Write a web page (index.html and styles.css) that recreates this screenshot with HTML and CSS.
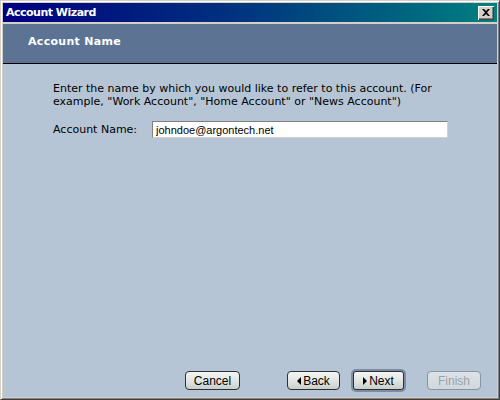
FILE: index.html
```html
<!DOCTYPE html>
<html lang="en">
<head>
    <meta charset="UTF-8">
    <title>Account Wizard</title>
    <link rel="stylesheet" href="styles.css">
</head>
<body>
    <div class="window">
        <div class="titlebar">
            <span class="title">Account Wizard</span>
            <button class="close-btn" aria-label="Close">
                <svg width="8" height="7" viewBox="0 0 8 7">
                    <path d="M0 0 L2 0 L4 2 L6 0 L8 0 L5 3.5 L8 7 L6 7 L4 5 L2 7 L0 7 L3 3.5 Z" fill="#000"/>
                </svg>
            </button>
        </div>
        <div class="header">Account Name</div>
        <div class="content">
            <p class="intro">Enter the name by which you would like to refer to this account. (For<br>example, "Work Account", "Home Account" or "News Account")</p>
            <div class="field">
                <label class="field-label" for="accountName">Account Name:</label>
                <input class="field-input" type="text" id="accountName" value="johndoe@argontech.net">
            </div>
            <div class="footer">
                <button class="button cancel">Cancel</button>
                <button class="button back"><span class="arrow arrow-left"></span>Back</button>
                <span class="focus-ring"><button class="button next"><span class="arrow arrow-right"></span>Next</button></span>
                <button class="button finish" disabled>Finish</button>
            </div>
        </div>
    </div>
</body>
</html>
```

FILE: styles.css
```css
body {
    margin: 0;
    padding: 0;
    font-family: 'DejaVu Sans', sans-serif;
    background-color: #d4d0c8;
}
.window {
    box-sizing: border-box;
    width: 500px;
    height: 400px;
    display: flex;
    flex-direction: column;
    padding: 2px;
    background-color: #d4d0c8;
    border-top: 1px solid #d4d0c8;
    border-left: 1px solid #d4d0c8;
    border-right: 1px solid #404040;
    border-bottom: 1px solid #404040;
    box-shadow: inset 1px 1px 0 #fff, inset -1px -1px 0 #808080;
}
.titlebar {
    height: 19px;
    display: flex;
    align-items: center;
    justify-content: space-between;
    padding: 0 3px 0 3px;
    background: linear-gradient(to right, #000080 0%, #00307f 45%, #008080 100%);
}
.title {
    color: #fff;
    font-weight: bold;
    font-size: 11px;
    letter-spacing: -0.5px;
}
.close-btn {
    box-sizing: border-box;
    width: 16px;
    height: 14px;
    padding: 0;
    display: flex;
    align-items: center;
    justify-content: center;
    background-color: #d4d0c8;
    border: none;
    box-shadow: inset 1px 1px 0 #fff, inset -1px -1px 0 #404040, inset -2px -2px 0 #808080;
}
.header {
    box-sizing: border-box;
    margin-top: 2px;
    height: 40px;
    display: flex;
    align-items: center;
    padding: 0 0 4px 25px;
    background-color: #5d7394;
    border-bottom: 1px solid #000;
    color: #fff;
    font-weight: bold;
    font-size: 11px;
    letter-spacing: 0.3px;
}
.content {
    flex-grow: 1;
    display: flex;
    flex-direction: column;
    background-color: #b5c5d5;
    padding: 0 16px 5px 50px;
}
.intro {
    margin: 18px 0 0 0;
    font-size: 11px;
    line-height: 13px;
    color: #000;
}
.field {
    display: flex;
    align-items: center;
    margin-top: 13px;
}
.field-label {
    width: 99px;
    font-size: 11px;
}
.field-input {
    box-sizing: border-box;
    width: 296px;
    height: 17px;
    padding: 0 3px;
    font-family: 'Liberation Sans', Arial, sans-serif;
    font-size: 11px;
    color: #000;
    background-color: #fff;
    border-top: 1px solid #808080;
    border-left: 1px solid #808080;
    border-right: 1px solid #d4d0c8;
    border-bottom: 1px solid #d4d0c8;
    outline: none;
}
.footer {
    margin-top: auto;
    display: flex;
    align-items: center;
    justify-content: flex-end;
}
.button {
    box-sizing: border-box;
    height: 19px;
    display: flex;
    align-items: center;
    justify-content: center;
    padding: 0;
    font-family: 'Liberation Sans', Arial, sans-serif;
    font-size: 12px;
    color: #000;
    background: linear-gradient(to bottom, #f4f6f4 0%, #e2e6e2 50%, #c8d0cc 100%);
    border: 1px solid #303030;
    border-radius: 4px;
}
.cancel {
    width: 55px;
    margin-right: 47px;
}
.back {
    width: 53px;
    margin-right: 11px;
}
.focus-ring {
    display: flex;
    padding: 2px;
    background-color: #7d8ca4;
    border-radius: 5px;
    margin-right: 21px;
}
.next {
    width: 51px;
    border-radius: 3px;
}
.finish {
    width: 54px;
    color: #9aa4ac;
    border-color: #8894a0;
    background: linear-gradient(to bottom, #dde3e8 0%, #cfd8df 100%);
}
.arrow {
    width: 0;
    height: 0;
    border-top: 4px solid transparent;
    border-bottom: 4px solid transparent;
    margin-right: 2px;
}
.arrow-left {
    border-right: 4px solid #000;
}
.arrow-right {
    border-left: 4px solid #000;
}
```
